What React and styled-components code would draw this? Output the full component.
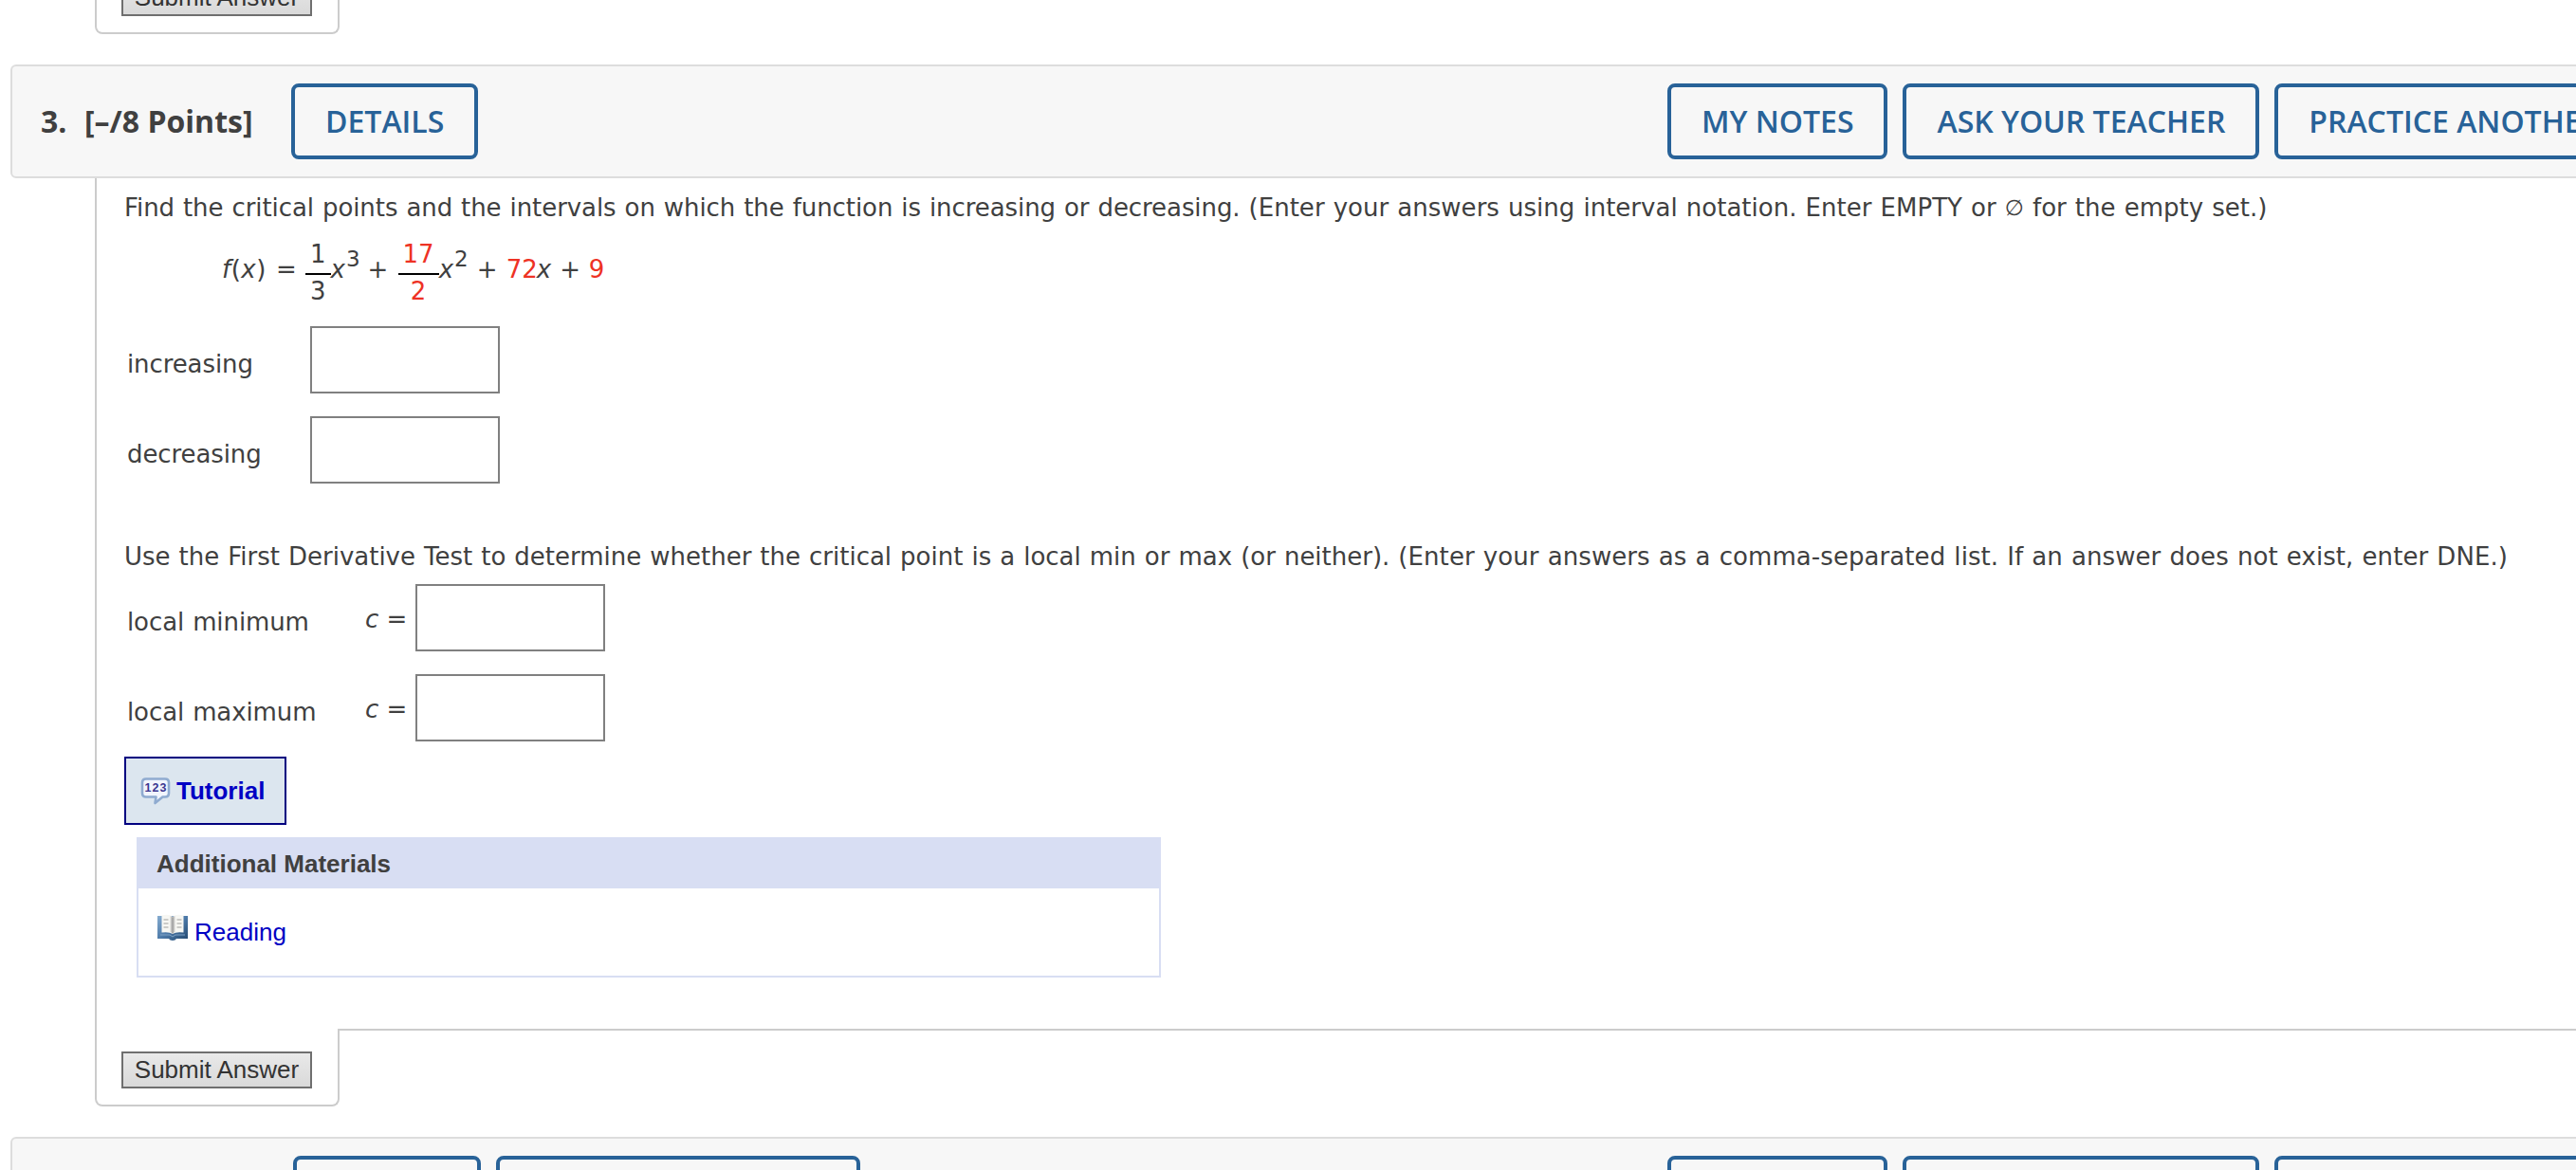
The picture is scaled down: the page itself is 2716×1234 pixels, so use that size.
import React from "react";
import styled, { createGlobalStyle } from "styled-components";

export default function App() {
  return (
    <Page>
      <GlobalStyle />
      <PreviousFooter>
        <SubmitFooter />
      </PreviousFooter>

      <QuestionHeader>
        <Number>3.</Number>
        <Points>[–/8 Points]</Points>
        <HeaderButton>DETAILS</HeaderButton>
        <HeaderActions />
      </QuestionHeader>

      <QuestionBody>
        <Sentence $track="-0.07px">
          Find the critical points and the intervals on which the function is
          increasing or decreasing.{" "}
          <Hint $track="0.02px">
            (Enter your answers using interval notation. Enter EMPTY or{" "}
            <EmptySet>∅</EmptySet> for the empty set.)
          </Hint>
        </Sentence>
        <Equation />
        <AnswerRow label="increasing" />
        <AnswerRow label="decreasing" />

        <Sentence $top={61} $bottom={13} $track="-0.01px">
          Use the First Derivative Test to determine whether the critical point
          is a local min or max (or neither).{" "}
          <Hint $track="0.07px">
            (Enter your answers as a comma-separated list. If an answer does not
            exist, enter DNE.)
          </Hint>
        </Sentence>
        <AnswerRow label="local minimum" variable="c" />
        <AnswerRow label="local maximum" variable="c" />

        <TutorialLink>
          <TutorialIcon />
          Tutorial
        </TutorialLink>

        <Materials>
          <MaterialsTitle>Additional Materials</MaterialsTitle>
          <MaterialsBody>
            <BookIcon />
            <ReadingLink>Reading</ReadingLink>
          </MaterialsBody>
        </Materials>
      </QuestionBody>
      <SubmitFooter />

      <QuestionHeader $next>
        <HeaderButton $width={198} />
        <HeaderButton $width={384} />
        <HeaderActions />
      </QuestionHeader>
    </Page>
  );
}

function HeaderActions() {
  return (
    <Actions>
      <HeaderButton>MY NOTES</HeaderButton>
      <HeaderButton>ASK YOUR TEACHER</HeaderButton>
      <HeaderButton>PRACTICE ANOTHER</HeaderButton>
    </Actions>
  );
}

function SubmitFooter() {
  return (
    <Footer>
      <SubmitTab>
        <SubmitButton>Submit Answer</SubmitButton>
      </SubmitTab>
      <FooterRule />
    </Footer>
  );
}

function AnswerRow({ label, variable }) {
  return (
    <Row>
      <Label $width={variable ? 251 : 193}>{label}</Label>
      {variable && (
        <Variable>
          <i>{variable}</i> =
        </Variable>
      )}
      <AnswerInput />
    </Row>
  );
}

function Equation() {
  return (
    <Formula>
      <Term $width={57} $track="0.5px">
        <i>f</i>(<i>x</i>)
      </Term>
      <Term $width={31}>=</Term>
      <Fraction>
        <Numerator>1</Numerator>
        <Denominator>3</Denominator>
      </Fraction>
      <Term $width={39}>
        <i>x</i>
        <Power>3</Power>
      </Term>
      <Term $width={32}>+</Term>
      <Fraction $red>
        <Numerator>17</Numerator>
        <Denominator>2</Denominator>
      </Fraction>
      <Term $width={40}>
        <i>x</i>
        <Power>2</Power>
      </Term>
      <Term $width={31}>+</Term>
      <Term $width={32} $red>
        72
      </Term>
      <Term $width={24.5}>
        <i>x</i>
      </Term>
      <Term $width={30.5}>+</Term>
      <Term $width={20} $red>
        9
      </Term>
    </Formula>
  );
}

function TutorialIcon() {
  return (
    <svg width="32" height="32" viewBox="0 0 32 32">
      <path
        d="M6 3.500h20q4 0 4 4v11q0 4-4 4h-2.500l-8 6.500 1-6.500H6q-4 0-4-4v-11q0-4 4-4z"
        fill="#f1f5fd"
        stroke="#8fabd0"
        strokeWidth="2.600"
        strokeLinejoin="round"
      />
      <text
        x="16"
        y="17"
        textAnchor="middle"
        textLength="23"
        fontFamily="Liberation Sans, sans-serif"
        fontWeight="bold"
        fontSize="12.500"
        fill="#3b3790"
      >
        123
      </text>
    </svg>
  );
}

function BookIcon() {
  return (
    <svg width="32" height="30" viewBox="0 0 32 30">
      <defs>
        <linearGradient id="cover" x1="0" y1="0" x2="1" y2="1">
          <stop offset="0" stopColor="#86acd0" />
          <stop offset="0.500" stopColor="#4c79a8" />
          <stop offset="1" stopColor="#23486f" />
        </linearGradient>
        <linearGradient id="spine" x1="0" y1="0" x2="1" y2="0">
          <stop offset="0" stopColor="#f4f4f1" />
          <stop offset="0.500" stopColor="#9b9b9b" />
          <stop offset="1" stopColor="#f4f4f1" />
        </linearGradient>
      </defs>
      <path d="M0 3h32v24H20q-1 2-4 2t-4-2H0z" fill="url(#cover)" />
      <path d="M3 23h10l3 2 3-2h10" fill="none" stroke="#7fa3c6" strokeWidth="1" />
      <path
        d="M4.500 2.500q8-2 11.500 1.500 3.500-3.500 11.500-1.500V20.500q-8-1-11.500 1.500-3.500-2.500-11.500-1.500z"
        fill="#f7f7f3"
      />
      <path d="M13 3q2 0 3 1.500Q17 3 19 3v17q-2 0-3 2-1-2-3-2z" fill="url(#spine)" />
      <path
        d="M6.500 7h5M6.500 11h5M6.500 15h5M20.500 7h5M20.500 11h5M20.500 15h5"
        stroke="#bdbdbb"
        strokeWidth="1.500"
      />
    </svg>
  );
}

const GlobalStyle = createGlobalStyle`
  * {
    box-sizing: border-box;
  }

  body {
    margin: 0;
    background: #ffffff;
    color: #404040;
    font-family: "DejaVu Sans", Verdana, sans-serif;
    font-size: 26px;
  }
`;

const Page = styled.div`
  width: 100%;
  height: 1234px;
  overflow: hidden;
`;

const PreviousFooter = styled.div`
  height: 68px;
  margin-top: -46px;
  margin-bottom: 46px;

  hr {
    border-color: transparent;
  }
`;

const QuestionHeader = styled.div`
  display: flex;
  align-items: center;
  width: 2787px;
  height: 120px;
  margin-left: 11px;
  margin-top: ${(p) => (p.$next ? "32px" : "0")};
  padding: 0 18px 0 ${(p) => (p.$next ? "296px" : "30px")};
  gap: ${(p) => (p.$next ? "16px" : "0")};
  border: 2px solid #dddddd;
  border-radius: 6px;
  background: #f7f7f7;
  font-family: "Open Sans", sans-serif;
  font-size: 32px;
  font-weight: 700;
`;

const Number = styled.div`
  width: 46px;
  padding-bottom: 2px;
`;

const Points = styled.div`
  width: 218px;
  padding-bottom: 2px;
`;

const HeaderButton = styled.button`
  flex: none;
  width: ${(p) => (p.$width ? `${p.$width}px` : "auto")};
  height: 80px;
  padding: 0 32px 2px;
  border: 4px solid #286298;
  border-radius: 8px;
  background: transparent;
  color: #286298;
  font: 600 32px "Open Sans", sans-serif;
  white-space: nowrap;
`;

const Actions = styled.div`
  display: flex;
  gap: 16px;
  margin-left: auto;
`;

const QuestionBody = styled.div`
  height: 897px;
  margin-left: 100px;
  padding: 15px 0 0 29px;
  border-left: 2px solid #cccccc;
`;

const Sentence = styled.p`
  margin: ${(p) => p.$top || 0}px 0 ${(p) => p.$bottom || 0}px;
  line-height: 32px;
  letter-spacing: ${(p) => p.$track};
  word-spacing: 0.8px;
  white-space: nowrap;
`;

const Hint = styled.span`
  letter-spacing: ${(p) => p.$track};
`;

const EmptySet = styled.span`
  font-size: 23px;
  line-height: 0;
  vertical-align: 1px;
`;

const Formula = styled.div`
  display: flex;
  align-items: flex-start;
  height: 74px;
  margin: 15px 0 20px 103px;
`;

const Term = styled.div`
  flex: none;
  width: ${(p) => p.$width}px;
  line-height: 68px;
  letter-spacing: ${(p) => p.$track || "normal"};
  color: ${(p) => (p.$red ? "#ee3224" : "inherit")};
  white-space: nowrap;
`;

const Power = styled.span`
  margin-left: 1px;
  font-size: 23px;
  line-height: 0;
  vertical-align: 12px;
`;

const Fraction = styled.div`
  text-align: center;
  color: ${(p) => (p.$red ? "#ee3224" : "inherit")};
`;

const Numerator = styled.div`
  height: 40px;
  padding: 0 5px;
  border-bottom: 2px solid #000000;
  line-height: 36px;
`;

const Denominator = styled.div`
  line-height: 34px;
`;

const Row = styled.div`
  display: flex;
  align-items: center;
  height: 71px;
  margin-left: 3px;

  & + & {
    margin-top: 24px;
  }
`;

const Label = styled.div`
  width: ${(p) => p.$width}px;
  margin-top: 9px;
  letter-spacing: -0.1px;
  word-spacing: 0.9px;
`;

const Variable = styled.div`
  width: 53px;
  margin-top: 2px;
`;

const AnswerInput = styled.input`
  width: 200px;
  height: 71px;
  border: 2px solid #808080;
  border-radius: 0;
  background: #ffffff;
`;

const TutorialLink = styled.a`
  display: flex;
  align-items: center;
  width: 171px;
  height: 72px;
  margin-top: 16px;
  padding-left: 15px;
  gap: 6px;
  border: 2px solid #000080;
  background: #dce6ef;
  color: #0000c4;
  font: bold 26px "Liberation Sans", Arial, sans-serif;
`;

const Materials = styled.div`
  width: 1080px;
  height: 148px;
  margin: 13px 0 0 13px;
  border: 2px solid #d8def3;
  font-family: "Liberation Sans", Arial, sans-serif;
`;

const MaterialsTitle = styled.div`
  height: 52px;
  padding-left: 19px;
  background: #d8def3;
  font-weight: bold;
  line-height: 52px;
`;

const MaterialsBody = styled.div`
  display: flex;
  padding: 26px 0 0 20px;
  gap: 7px;
`;

const ReadingLink = styled.a`
  padding-top: 5px;
  color: #0000c4;
  line-height: 30px;
`;

const Footer = styled.div`
  display: flex;
  height: 82px;
  margin-left: 100px;
`;

const SubmitTab = styled.div`
  width: 258px;
  padding: 24px 0 0 26px;
  border: 2px solid #cccccc;
  border-top: 0;
  border-radius: 0 0 8px 8px;
`;

const SubmitButton = styled.button`
  width: 201px;
  height: 39px;
  padding: 0;
  border: 2px solid #6f6f6f;
  border-radius: 0;
  background: linear-gradient(#e9e9e9, #d9d9d9);
  color: #333333;
  font: 26px "Liberation Sans", Arial, sans-serif;
`;

const FooterRule = styled.hr`
  flex: 1;
  height: 0;
  margin: 0;
  border: 0;
  border-top: 2px solid #cccccc;
`;
